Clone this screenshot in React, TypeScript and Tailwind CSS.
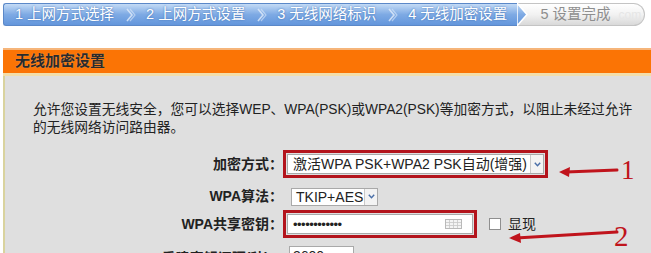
import React from "react"

const steps = ["1 上网方式选择", "2 上网方式设置", "3 无线网络标识", "4 无线加密设置"]

function Chevron() {
  return (
    <svg width="10" height="16" viewBox="0 0 10 16" className="shrink-0">
      <path d="M1 2 L6 8 L1 14" fill="none" stroke="#dbe8f8" strokeWidth="1.6" opacity="0.85" />
      <path d="M4 2 L9 8 L4 14" fill="none" stroke="#dbe8f8" strokeWidth="1.2" opacity="0.6" />
    </svg>
  )
}

function Keyboard() {
  return (
    <svg width="17" height="10" viewBox="0 0 17 10">
      <rect x="0.5" y="0.5" width="16" height="9" fill="#f4f4f4" stroke="#b9b9b9" />
      <path d="M1 3.5 H16 M1 6.5 H16 M4.5 1 V9 M8.5 1 V9 M12.5 1 V9" stroke="#c8c8c8" strokeWidth="0.8" />
    </svg>
  )
}

function DropArrow() {
  return (
    <span className="flex h-full w-[13px] items-center justify-center border-l border-[#c9c9c9] bg-[#f3f3f3]">
      <svg width="7" height="5" viewBox="0 0 7 5">
        <path d="M0.8 0.8 L3.5 3.8 L6.2 0.8" fill="none" stroke="#4a6fa8" strokeWidth="1.4" />
      </svg>
    </span>
  )
}

export default function App() {
  return (
    <div className="relative h-[253px] w-[651px] overflow-hidden bg-white font-['Liberation_Sans','Noto_Sans_CJK_SC',sans-serif] text-[14px] text-[#222]">
      {/* Step bar */}
      <div className="ml-[3px] mt-[3px] flex h-[23px] w-[642px]">
        <div className="flex h-full items-center rounded-l-[3px] border border-r-0 border-[#5b88c8] bg-linear-to-b from-[#c4dbf5] via-[#7eaae4] to-[#6396dc] pl-[11px] text-[14.5px] text-white [text-shadow:0_0_2px_#3d6db0]">
          {steps.map((s, i) => (
            <div key={s} className="flex items-center">
              <span className="whitespace-nowrap">{s}</span>
              {i < steps.length - 1 && (
                <span className="ml-[12px] mr-[10px] flex">
                  <Chevron />
                </span>
              )}
            </div>
          ))}
          <span className="w-[10px]" />
        </div>
        <div className="flex h-full flex-1 items-center rounded-r-full border border-l-0 border-[#c4c4c4] bg-linear-to-b from-white via-[#f2f2f2] to-[#d9d9d9]">
          <svg width="12" height="23" viewBox="0 0 12 23" className="-my-px shrink-0">
            <defs>
              <linearGradient id="tip" x1="0" y1="0" x2="0" y2="1">
                <stop offset="0" stopColor="#c4dbf5" />
                <stop offset="0.5" stopColor="#7eaae4" />
                <stop offset="1" stopColor="#6396dc" />
              </linearGradient>
            </defs>
            <polygon points="0,0 10,11.5 0,23" fill="url(#tip)" stroke="#ffffff" strokeWidth="1.5" />
          </svg>
          <span className="ml-[11px] whitespace-nowrap text-[14.5px] text-[#8e8e8e]">5 设置完成</span>
          <span className="ml-[8px] text-[12px] text-[#e6e6e6]">com</span>
        </div>
      </div>

      {/* Section header */}
      <div className="ml-[3px] mt-[22px] flex h-[28px] items-center border-t-2 border-b-[3px] border-t-[#f6b57a] border-b-[#f3deaa] bg-[#fb7405] pl-[12px]">
        <span className="text-[15px] font-bold text-[#2a2a2a] [text-shadow:0_0_1px_#ffb070]">无线加密设置</span>
      </div>

      {/* Panel */}
      <div className="ml-[3px] h-[200px] border-l-2 border-[#d9d39e] bg-[#dfdfdf] pt-[25px]">
        <p className="pl-[28px] text-[13.75px] leading-[18px] text-[#222]">
          允许您设置无线安全，您可以选择WEP、WPA(PSK)或WPA2(PSK)等加密方式，以阻止未经过允许
          <br />
          的无线网络访问路由器。
        </p>

        {/* Row 1 */}
        <div className="mt-[13px] flex items-center">
          <span className="w-[278px] text-right font-bold">加密方式：</span>
          <div className="flex h-[28px] w-[265px] items-center border-[3px] border-[#b3141c] p-px">
            <div className="flex h-full w-full items-center border border-[#a9a9a9] bg-white">
              <span className="flex-1 whitespace-nowrap pl-[5px]">激活WPA PSK+WPA2 PSK自动(增强)</span>
              <DropArrow />
            </div>
          </div>
        </div>

        {/* Row 2 */}
        <div className="mt-[8px] flex items-center">
          <span className="w-[278px] text-right font-bold">WPA算法：</span>
          <div className="ml-[8px] flex h-[18px] w-[87px] items-center border border-[#a9a9a9] bg-white">
            <span className="flex-1 pl-[4px] leading-none">TKIP+AES</span>
            <DropArrow />
          </div>
        </div>

        {/* Row 3 */}
        <div className="mt-[3px] flex items-center">
          <span className="w-[278px] text-right font-bold">WPA共享密钥：</span>
          <div className="flex h-[28px] w-[194px] items-center border-[3px] border-[#b3141c] p-px">
            <div className="flex h-full w-full items-center justify-between border border-[#a9a9a9] bg-white pl-[5px] pr-[10px]">
              <span className="text-[13px] leading-none tracking-[-0.5px]">••••••••••••</span>
              <Keyboard />
            </div>
          </div>
          <span className="ml-[12px] h-[12px] w-[12px] border border-[#8f8f8f] bg-white" />
          <span className="ml-[7px] text-[#222]">显现</span>
        </div>

        {/* Row 4 */}
        <div className="mt-[8px] flex items-start">
          <span className="w-[278px] pt-[2px] text-right font-bold">重建密钥间隔(秒)：</span>
          <div className="ml-[6px] flex h-[20px] w-[65px] items-center border border-[#a9a9a9] bg-white pl-[3px]">
            3600
          </div>
        </div>
      </div>

      {/* Annotations */}
      <svg className="absolute left-0 top-0" width="651" height="253" viewBox="0 0 651 253">
        <path d="M617 170 L566 172" stroke="#c0141c" strokeWidth="3" fill="none" strokeLinecap="round" />
        <path d="M559 172 L570 167 L569 177 Z" fill="#c0141c" />
        <path d="M617 232 L516 238" stroke="#c0141c" strokeWidth="3" fill="none" strokeLinecap="round" />
        <path d="M509 238 L520 233 L521 243 Z" fill="#c0141c" />
      </svg>
      <span className="absolute left-[621px] top-[157px] font-['Liberation_Serif',serif] text-[27px] leading-none text-[#c0141c]">1</span>
      <span className="absolute left-[614px] top-[222px] font-['Liberation_Serif',serif] text-[29px] leading-none text-[#c0141c]">2</span>
    </div>
  )
}
